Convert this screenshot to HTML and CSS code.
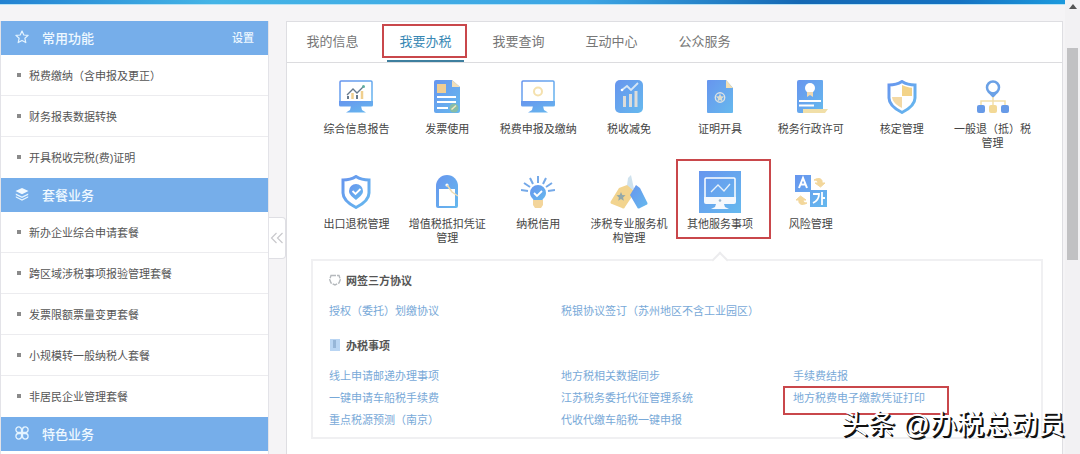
FILE: index.html
```html
<!DOCTYPE html>
<html lang="zh-CN">
<head>
    <meta charset="UTF-8">
    <meta name="viewport" content="width=device-width, initial-scale=1.0">
    <title>我要办税</title>
    <link rel="stylesheet" href="styles.css">
</head>
<body>
    <svg class="defs" aria-hidden="true">
        <defs>
            <linearGradient id="blue" x1="0" y1="0" x2="1" y2="1">
                <stop offset="0" stop-color="#6795ee"/>
                <stop offset="1" stop-color="#66b9ee"/>
            </linearGradient>
        </defs>
    </svg>

    <div class="window">
        <div class="page">
            <div class="banner"></div>
            <div class="content">
                <aside class="sidebar">
                    <div class="side-head">
                        <svg class="side-icon" viewBox="0 0 14 14"><path d="M7 1l1.800 4 4.300.4-3.200 2.900.9 4.300L7 10.400l-3.800 2.200.9-4.300L.9 5.400 5.200 5z" fill="none" stroke="#e4f4ff" stroke-width="1.200" stroke-linejoin="round"/></svg>
                        <h2>常用功能</h2>
                        <a class="setting" href="#">设置</a>
                    </div>
                    <ul class="side-list">
                        <li><a href="#">税费缴纳（含申报及更正）</a></li>
                        <li><a href="#">财务报表数据转换</a></li>
                        <li><a href="#">开具税收完税(费)证明</a></li>
                    </ul>
                    <div class="side-head">
                        <svg class="side-icon" viewBox="0 0 14 14"><path d="M7 1l6.500 3L7 7.200.5 4z" fill="#f2faff"/><path d="M.8 6.500L7 9.600l6.200-3.100v1.400L7 11 .8 7.900zM.8 9.200L7 12.300l6.200-3.100v1.300L7 13.700.8 10.500z" fill="#e4f4ff"/></svg>
                        <h2>套餐业务</h2>
                    </div>
                    <ul class="side-list">
                        <li><a href="#">新办企业综合申请套餐</a></li>
                        <li><a href="#">跨区域涉税事项报验管理套餐</a></li>
                        <li><a href="#">发票限额票量变更套餐</a></li>
                        <li><a href="#">小规模转一般纳税人套餐</a></li>
                        <li><a href="#">非居民企业管理套餐</a></li>
                    </ul>
                    <div class="side-head">
                        <svg class="side-icon" viewBox="0 0 14 14"><g fill="none" stroke="#e4f4ff" stroke-width="1.300"><path d="M6.500 6.500H3.700a2.800 2.800 0 1 1 2.800-2.800zM7.500 6.500V3.700a2.800 2.800 0 1 1 2.800 2.800zM6.500 7.500v2.800a2.800 2.800 0 1 1-2.800-2.800zM7.500 7.500h2.800a2.800 2.800 0 1 1-2.800 2.800z"/></g></svg>
                        <h2>特色业务</h2>
                    </div>
                </aside>

                <button class="collapse" aria-label="收起">
                    <svg viewBox="0 0 14 12"><path d="M6.500 1L1.500 6l5 5M12.500 1l-5 5 5 5" fill="none" stroke="#c9c9cd" stroke-width="1.200"/></svg>
                </button>

                <main class="panel">
                    <nav class="tabs">
                        <button>我的信息</button>
                        <button class="active">我要办税</button>
                        <button>我要查询</button>
                        <button>互动中心</button>
                        <button>公众服务</button>
                    </nav>

                    <div class="services">
                        <a class="service" href="#">
                            <svg viewBox="0 0 34 34"><rect x="1" y="1" width="32" height="24" rx="1" fill="#fff" stroke="url(#blue)" stroke-width="1.500"/><path d="M0 21h34v4a1.500 1.500 0 0 1-1.500 1.500h-31A1.500 1.500 0 0 1 0 25zM12 26h10l1 4 4 2.500H7L11 30z" fill="url(#blue)"/><path d="M8 15l6-6 4 4 6-6" fill="none" stroke="#66798c" stroke-width="1.300"/><circle cx="24.500" cy="6.500" r="1.500" fill="#5fae9e"/><path d="M9 16v3M18 15v4" stroke="#66798c" stroke-width="2"/><path d="M13.500 13v6M23 11v8" stroke="#f0cf8e" stroke-width="2.500"/></svg>
                            <span>综合信息报告</span>
                        </a>
                        <a class="service" href="#">
                            <svg viewBox="0 0 34 34"><path d="M6 0h16l8 7v24a2 2 0 0 1-2 2H6a2 2 0 0 1-2-2V2a2 2 0 0 1 2-2z" fill="url(#blue)"/><path d="M22 0l8 7h-8z" fill="#f1dfb9"/><path d="M7 4h9v9H7z" fill="#f0cd92"/><path d="M7 17h19M7 22h19M7 28h11" stroke="#fff" stroke-width="2"/><circle cx="24" cy="28" r="4.500" fill="#86bda8"/><path d="M21.500 29.500l4.500-4" stroke="#f5e7bd" stroke-width="1.500"/></svg>
                            <span>发票使用</span>
                        </a>
                        <a class="service" href="#">
                            <svg viewBox="0 0 34 34"><rect x="1" y="1" width="32" height="24" rx="1" fill="#fff" stroke="url(#blue)" stroke-width="1.500"/><path d="M0 21h34v4a1.500 1.500 0 0 1-1.500 1.500h-31A1.500 1.500 0 0 1 0 25zM12 26h10l1 4 4 2.500H7L11 30z" fill="url(#blue)"/><circle cx="17" cy="11.500" r="4" fill="none" stroke="#f5e1ae" stroke-width="2"/></svg>
                            <span>税费申报及缴纳</span>
                        </a>
                        <a class="service" href="#">
                            <svg viewBox="0 0 34 34"><rect x="3" width="28" height="33" rx="5" fill="url(#blue)"/><path d="M10 10l5-4 4 4 7-7" fill="none" stroke="#d6e6f5" stroke-width="1.800"/><circle cx="10" cy="10" r="1.300" fill="#fff"/><path d="M12.500 16v11M18.500 14v13M24 11v16" stroke="#dcdcda" stroke-width="3"/></svg>
                            <span>税收减免</span>
                        </a>
                        <a class="service" href="#">
                            <svg viewBox="0 0 34 34"><path d="M5 0h18l7 8v24a1 1 0 0 1-1 1H5a1 1 0 0 1-1-1V1a1 1 0 0 1 1-1z" fill="url(#blue)"/><path d="M23 0l7 8h-7z" fill="#f2dfb4"/><circle cx="17" cy="17.500" r="4.700" fill="none" stroke="#dbe2e4" stroke-width="1.400"/><path d="M17 13.500l1.200 2.700 3 .3-2.200 2 .6 3-2.600-1.500-2.600 1.500.6-3-2.200-2 3-.3z" fill="#dbdccf"/></svg>
                            <span>证明开具</span>
                        </a>
                        <a class="service" href="#">
                            <svg viewBox="0 0 34 34"><path d="M5 0h23a1 1 0 0 1 1 1v31a1 1 0 0 1-1 1H5a2 2 0 0 1-2-2V2a2 2 0 0 1 2-2z" fill="url(#blue)"/><circle cx="16" cy="8" r="5" fill="#fff"/><path d="M13 12h6v5l-3-2-3 2z" fill="#f0d9b0"/><path d="M5 21h22M5 25.500h15" stroke="#fff" stroke-width="2"/><path d="M9 29h25l-3 4H9z" fill="#f1dfa8"/></svg>
                            <span>税务行政许可</span>
                        </a>
                        <a class="service" href="#">
                            <svg viewBox="0 0 34 34"><path d="M17 1.500c4 2.500 8.500 3.500 13 3.500v13c0 7-6 11-13 14.500C10 29 4 25 4 18V5c4.500 0 9-1 13-3.500z" fill="#fff" stroke="url(#blue)" stroke-width="3"/><path d="M17 5c3 1.500 6.500 2.500 10 2.800V16H17z" fill="#f3d388"/><path d="M7 17h10v11c-5-2.500-9.500-6-10-11z" fill="#f3d9a5"/></svg>
                            <span>核定管理</span>
                        </a>
                        <a class="service" href="#">
                            <svg viewBox="0 0 34 34"><circle cx="17" cy="7.500" r="6" fill="#fff" stroke="#6ba1e6" stroke-width="2.500"/><path d="M12 12.500h10L17 18z" fill="#6ba1e6"/><path d="M5 25v-4h24v4M17 17v8" fill="none" stroke="#f2dfab" stroke-width="1.500"/><rect x="1" y="25" width="8" height="8" rx="2" fill="#679ae7"/><rect x="13" y="25" width="8" height="8" rx="2" fill="#f3d996"/><rect x="25" y="25" width="8" height="8" rx="2" fill="#679ae7"/></svg>
                            <span>一般退（抵）税管理</span>
                        </a>
                        <a class="service" href="#">
                            <svg viewBox="0 0 34 34"><path d="M17 1.500c4 2.500 8.500 3.500 13 3.500v13c0 7-6 11-13 14.500C10 29 4 25 4 18V5c4.500 0 9-1 13-3.500z" fill="#fff" stroke="url(#blue)" stroke-width="3"/><path d="M17 9a7 7 0 0 1 7 7c0 4-4 6-7 9-3-3-7-5-7-9a7 7 0 0 1 7-7z" fill="url(#blue)"/><path d="M13.500 16l3 3 5-5" fill="none" stroke="#fff" stroke-width="1.800"/></svg>
                            <span>出口退税管理</span>
                        </a>
                        <a class="service" href="#">
                            <svg viewBox="0 0 34 34"><path d="M6 31V11a11 11 0 0 1 22 0v20a2 2 0 0 1-2 2H8a2 2 0 0 1-2-2z" fill="url(#blue)"/><path d="M9 14h16v17H9z" fill="#fff"/><circle cx="17" cy="10" r="1.600" fill="#fff"/><path d="M17 10l5 7 6 4" fill="none" stroke="#efdcb0" stroke-width="1.500"/></svg>
                            <span>增值税抵扣凭证管理</span>
                        </a>
                        <a class="service" href="#">
                            <svg viewBox="0 0 34 34"><path d="M17 1v7M9 3l3 6M25 3l-3 6M3 8l6 4M31 8l-6 4M0 15l7 1M34 15l-7 1" stroke="#75a9e8" stroke-width="2"/><path d="M17 10a8 8 0 0 1 8 8c0 4-3 5-4 8h-8c-1-3-4-4-4-8a8 8 0 0 1 8-8z" fill="url(#blue)"/><path d="M13 18l3 3 5-5" fill="none" stroke="#fff" stroke-width="1.800"/><path d="M12 25h10v5l-2 3h-6l-2-3z" fill="#f3d59b"/></svg>
                            <span>纳税信用</span>
                        </a>
                        <a class="service" href="#">
                            <svg viewBox="0 0 38 34"><path d="M18 3l3-3 3 14-8 4z" fill="#cfe2ee"/><path d="M9 13l8-3 8 7-10 15a2 2 0 0 1-3 1L2 29a2 2 0 0 1-1-3z" fill="#f2d48f"/><path d="M11 17l1.300 3 3.200.3-2.400 2.200.7 3.200-2.800-1.700-2.800 1.700.7-3.200-2.400-2.200 3.200-.3z" fill="#93a8a8"/><path d="M20 20l6-10 4 3 7 14a2 2 0 0 1-1 3l-6 3a2 2 0 0 1-3-1z" fill="url(#blue)"/></svg>
                            <span>涉税专业服务机构管理</span>
                        </a>
                        <a class="service selected" href="#">
                            <svg viewBox="0 0 42 42"><path d="M0 0h42v42H0z" fill="url(#blue)"/><rect x="6" y="7" width="30" height="20" rx="1" fill="none" stroke="#fff" stroke-width="1.500"/><path d="M5 26h32v5a2 2 0 0 1-2 2H7a2 2 0 0 1-2-2zM17 33h8l1 3 4 2H12l4-2z" fill="#f4f8fd"/><path d="M12 21l7-7 6 6 6-7" fill="none" stroke="#e7f1fb" stroke-width="1.300"/><circle cx="21" cy="29.500" r="1.300" fill="#9cb7d0"/></svg>
                            <span>其他服务事项</span>
                        </a>
                        <a class="service" href="#">
                            <svg viewBox="0 0 34 34"><path d="M1 0h16v17H1zM16 15h17v17H16z" fill="url(#blue)"/><path d="M5 13L9 3l4 10M6.500 9.500h5" fill="none" stroke="#fff" stroke-width="2"/><path d="M19 19h6c0 4-2 7-6 9M28 17v13M28 23h3" fill="none" stroke="#fff" stroke-width="1.800"/><path d="M20 5c5-3 9-1 8 3h3l-4.500 4L21 8h3c0-2-2-3-4-3zM13 28c-5 3-9 1-8-3H2l4.500-4L12 25H9c0 2 2 3 4 3z" fill="#f3d79b" stroke="#f3d79b"/></svg>
                            <span>风险管理</span>
                        </a>
                    </div>

                    <section class="detail">
                        <h3>
                            <svg viewBox="0 0 12 12"><path d="M2 1.500h8l1.300 4-1.300 3.500-4 2-4-2L.7 5.500z" fill="none" stroke="#b5b9bd" stroke-width="1.400" stroke-dasharray="5 1"/></svg>
                            网签三方协议
                        </h3>
                        <ul class="links">
                            <li><a href="#">授权（委托）划缴协议</a></li>
                            <li><a href="#">税银协议签订（苏州地区不含工业园区）</a></li>
                        </ul>
                        <h3>
                            <svg viewBox="0 0 12 12"><path d="M1 0h10v12H1z" fill="#b9d5f3"/><path d="M4 2h3M4 4h3M4 6h3M4 8h3" stroke="#7597bd" stroke-width="1"/></svg>
                            办税事项
                        </h3>
                        <ul class="links">
                            <li><a href="#">线上申请邮递办理事项</a></li>
                            <li><a href="#">地方税相关数据同步</a></li>
                            <li><a href="#">手续费结报</a></li>
                            <li><a href="#">一键申请车船税手续费</a></li>
                            <li><a href="#">江苏税务委托代征管理系统</a></li>
                            <li><a class="marked" href="#">地方税费电子缴款凭证打印</a></li>
                            <li><a href="#">重点税源预测（南京）</a></li>
                            <li><a href="#">代收代缴车船税一键申报</a></li>
                        </ul>
                    </section>
                </main>
            </div>
        </div>
        <div class="scrollbar">
            <svg viewBox="0 0 8 5"><path d="M0 5l4-5 4 5z" fill="#555"/></svg>
            <div class="thumb"></div>
        </div>
    </div>

    <div class="watermark">头条 @办税总动员</div>
</body>
</html>
```

FILE: styles.css
```css
* {
    box-sizing: border-box;
}
body {
    margin: 0;
    background: #f5f4f6;
    color: #555;
    font-family: "Liberation Sans", "Noto Sans CJK SC", sans-serif;
    font-size: 11px;
}
a {
    color: inherit;
    text-decoration: none;
}
ul {
    margin: 0;
    padding: 0;
    list-style: none;
}
h2, h3 {
    margin: 0;
}
button {
    padding: 0;
    border: none;
    background: none;
    color: inherit;
    font-family: inherit;
}
.defs {
    position: absolute;
    width: 0;
    height: 0;
}
.window {
    display: flex;
    min-height: 100vh;
}
.page {
    display: flex;
    flex: 1;
    flex-direction: column;
}
.banner {
    height: 5px;
    border-bottom: 1px solid #b9e3f7;
    background: linear-gradient(90deg, #2382d2, #45b4e6 20%, #3da5e4 55%, #1568b4 75%, #1572c2 90%, #1c9ade);
}
.content {
    display: flex;
    flex: 1;
    padding: 16px 2px 0 0;
}

/* left menu */
.sidebar {
    flex: none;
    width: 269px;
    border: 1px solid #e3e3e8;
    border-top: none;
    border-bottom: none;
    background: #fff;
}
.side-head {
    display: flex;
    align-items: center;
    gap: 13px;
    height: 34px;
    padding: 0 14px 2px;
    background: #76aeea;
    color: #eef8ff;
}
.side-head h2 {
    flex: 1;
    font-size: 13px;
    font-weight: 500;
}
.side-icon {
    width: 14px;
    height: 14px;
}
.setting {
    font-weight: 500;
}
.side-list li {
    display: flex;
    align-items: center;
    gap: 8px;
    height: 41px;
    padding: 0 0 1px 16px;
    border-bottom: 1px solid #ececef;
}
.side-list li:last-child {
    border-bottom: none;
}
.side-list li::before {
    content: "";
    width: 4px;
    height: 4px;
    background: #8a8a8a;
}
.collapse {
    display: flex;
    flex: none;
    align-items: center;
    justify-content: center;
    width: 17px;
    height: 42px;
    margin-top: 196px;
    border: 1px solid #dfdfe4;
    border-left: none;
    border-radius: 0 4px 4px 0;
    background: #fff;
}
.collapse svg {
    width: 14px;
    height: 12px;
}

/* right panel */
.panel {
    flex: 1;
    border: 1px solid #dedee2;
    border-bottom: none;
    background: #fff;
}
.tabs {
    display: flex;
    gap: 16px;
    height: 41px;
    padding-left: 7px;
    border-bottom: 1px solid #dcdcdf;
}
.tabs button {
    position: relative;
    width: 77px;
    padding-bottom: 2px;
    border-bottom: 2px solid transparent;
    color: #777;
    font-size: 13px;
}
.tabs .active {
    border-bottom-color: #3e7f9f;
    color: #3888b4;
}
.tabs .active::after,
.selected::after,
.marked::after {
    content: "";
    position: absolute;
    border: 2px solid #c9474b;
}
.tabs .active::after {
    inset: 2px -3px 2px -5px;
}
.services {
    display: grid;
    grid-template-columns: repeat(8, 1fr);
    grid-auto-rows: 95px;
    padding: 17px 24px 0;
}
.service {
    position: relative;
    display: flex;
    flex-direction: column;
    align-items: center;
    gap: 8px;
    color: #444;
    line-height: 14px;
    text-align: center;
}
.service svg {
    height: 34px;
}
.service span {
    width: 80px;
}
.selected svg {
    height: 42px;
    margin: -4px 0;
}
.selected::after {
    inset: -16px -6px 31px 1px;
}
.detail {
    position: relative;
    margin: -11px 19px 14px 24px;
    padding: 9px 16px 0;
    border: 2px solid #f0f0f2;
}
.detail::before {
    content: "";
    position: absolute;
    top: -7px;
    left: 401px;
    width: 10px;
    height: 10px;
    border: 2px solid #ececee;
    border-right: none;
    border-bottom: none;
    background: #fff;
    transform: rotate(45deg);
}
.detail h3 {
    display: flex;
    align-items: center;
    gap: 5px;
    height: 20px;
    font-size: 11px;
    font-weight: 600;
}
.detail h3 svg {
    width: 12px;
    height: 12px;
}
.links {
    display: grid;
    grid-template-columns: repeat(3, 1fr);
    padding: 10px 0 6px;
    color: #78a9d8;
    line-height: 22px;
}
.links + h3 {
    margin-top: 7px;
}
.marked {
    position: relative;
}
.marked::after {
    inset: -6px -24px -11px -10px;
}

/* browser scroll bar */
.scrollbar {
    display: flex;
    flex: none;
    flex-direction: column;
    align-items: center;
    gap: 39px;
    width: 15px;
    padding-top: 4px;
    background: #f2f1f3;
}
.scrollbar svg {
    width: 8px;
    height: 5px;
}
.thumb {
    width: 11px;
    height: 212px;
    background: #c1c1c3;
}
.watermark {
    position: absolute;
    right: 15px;
    bottom: 11px;
    color: #fff;
    font-size: 27px;
    line-height: 36px;
    text-shadow: 1px 1px 0 #111, 2px 2px 0 #111;
}
```
